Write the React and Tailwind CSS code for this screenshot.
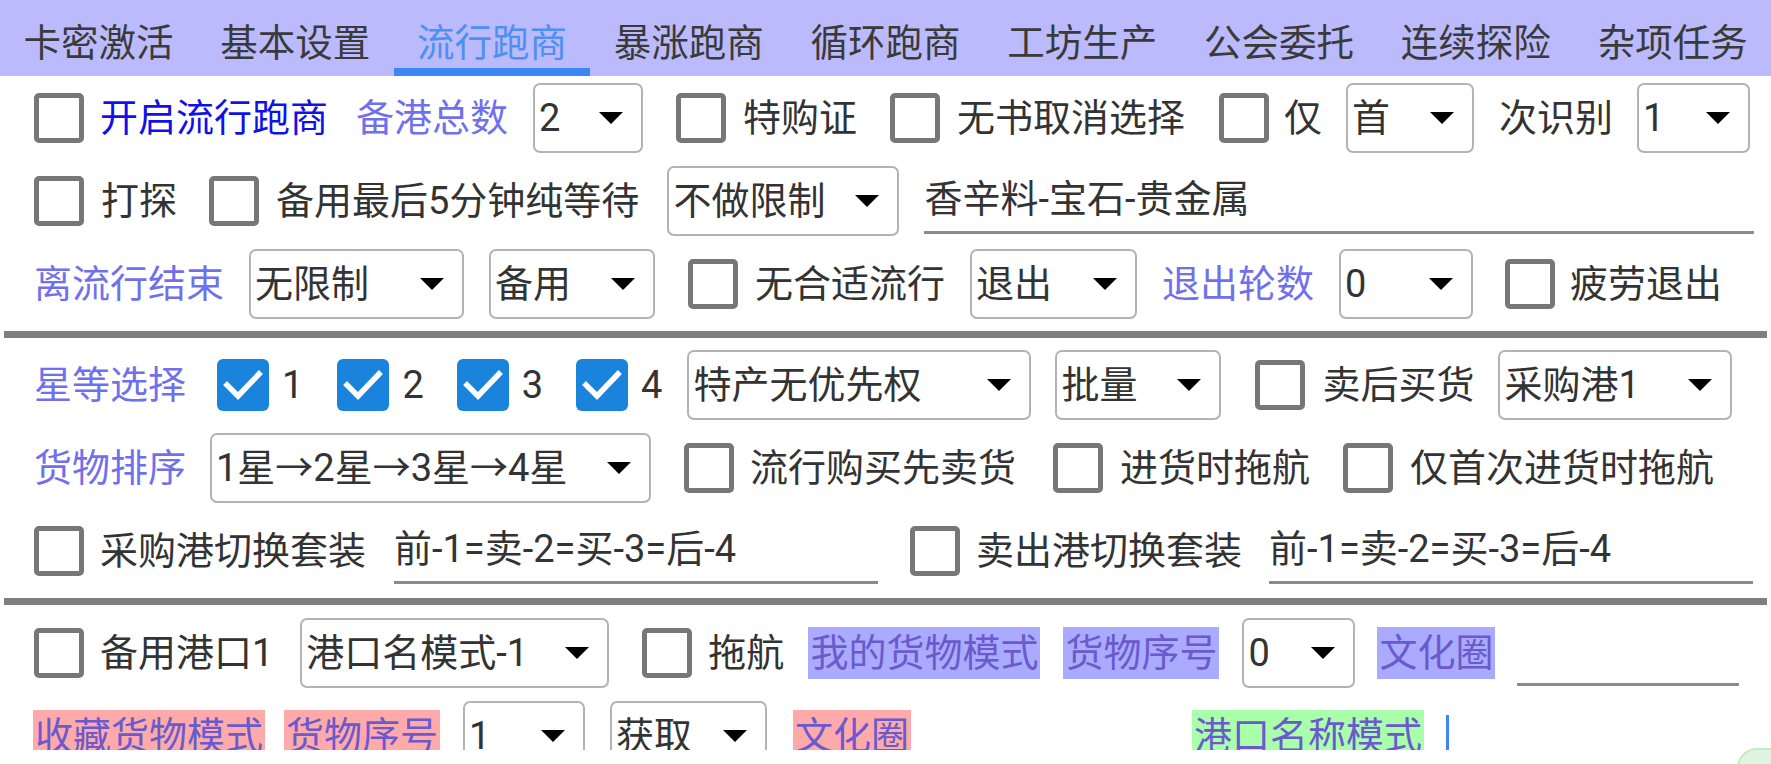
import React from 'react';

const tabs = ['卡密激活', '基本设置', '流行跑商', '暴涨跑商', '循环跑商', '工坊生产', '公会委托', '连续探险', '杂项任务'];

// unchecked android-style checkbox
const Box = ({ className = '' }) => (
    <div className={`w-[50px] h-[50px] shrink-0 rounded-[5px] border-[5px] border-[#777777] ${className}`}></div>
);

const Checked = ({ className = '' }) => (
    <div className={`w-[52px] h-[52px] shrink-0 rounded-[6px] bg-[#1a84dc] flex items-center justify-center ${className}`}>
        <svg width="52" height="52" viewBox="0 0 52 52">
            <polyline points="10,26 21,37 42,15" fill="none" stroke="#ffffff" strokeWidth="5.5" strokeLinecap="square" />
        </svg>
    </div>
);

const T = ({ children, className = '' }) => (
    <span className={`shrink-0 whitespace-nowrap ${className}`}>{children}</span>
);

const Select = ({ value, className = '' }) => (
    <div className={`h-[70px] shrink-0 rounded-[7px] border-2 border-[#b3b3b3] flex items-center justify-between pl-[4px] pr-[18px] ${className}`}>
        <span className="whitespace-nowrap">{value}</span>
        <svg width="24" height="12" viewBox="0 0 24 12" className="shrink-0">
            <polygon points="0,0 24,0 12,12" fill="#000000" />
        </svg>
    </div>
);

const Input = ({ value, className = '' }) => (
    <div className={`h-[66px] shrink-0 border-b-[3px] border-[#8c8c8c] flex items-center whitespace-nowrap ${className}`}>{value}</div>
);

const Mark = ({ children, className = '' }) => (
    <span className={`shrink-0 whitespace-nowrap px-[2px] leading-[52px] text-[#6a5acd] ${className}`}>{children}</span>
);

const Divider = ({ className = '' }) => (
    <div className={`h-[7px] mx-[4px] bg-[#7f7f7f] ${className}`}></div>
);

const App = () => {
    return (
        <div className="w-[1771px] h-[764px] bg-white relative overflow-hidden font-['Roboto','Noto_Sans_CJK_SC',sans-serif] text-[#333333]">
            <div className="h-[750px] overflow-hidden">

                {/* tab bar */}
                <div className="h-[76px] bg-[#babafc] flex">
                    {tabs.map((t, i) => (
                        <div key={t} className="flex-1 relative flex items-center justify-center pt-[9px]">
                            <span className={`text-[37.5px] leading-[48px] whitespace-nowrap ${i === 2 ? 'text-[#4f8ff2]' : 'text-[#3a3a3a]'}`}>{t}</span>
                            {i === 2 && <div className="absolute left-0 right-0 bottom-0 h-[8px] bg-[#3c87f5]"></div>}
                        </div>
                    ))}
                </div>

                <div className="text-[38px] leading-[48px]">
                    {/* row 1 */}
                    <div className="h-[83px] flex items-center">
                        <Box className="ml-[34px]" />
                        <T className="ml-[16px] text-[#1010e8]">开启流行跑商</T>
                        <T className="ml-[28px] text-[#7070ee]">备港总数</T>
                        <Select value="2" className="ml-[25px] w-[110px]" />
                        <Box className="ml-[33px]" />
                        <T className="ml-[17px]">特购证</T>
                        <Box className="ml-[33px]" />
                        <T className="ml-[17px]">无书取消选择</T>
                        <Box className="ml-[34px]" />
                        <T className="ml-[15px]">仅</T>
                        <Select value="首" className="ml-[24px] w-[128px]" />
                        <T className="ml-[25px]">次识别</T>
                        <Select value="1" className="ml-[24px] w-[113px]" />
                    </div>

                    {/* row 2 */}
                    <div className="h-[83px] flex items-center">
                        <Box className="ml-[34px]" />
                        <T className="ml-[17px]">打探</T>
                        <Box className="ml-[32px]" />
                        <T className="ml-[17px]">备用最后5分钟纯等待</T>
                        <Select value="不做限制" className="ml-[28px] w-[232px]" />
                        <Input value="香辛料-宝石-贵金属" className="ml-[25px] w-[830px]" />
                    </div>

                    {/* row 3 */}
                    <div className="h-[83px] flex items-center">
                        <T className="ml-[34px] text-[#7070ee]">离流行结束</T>
                        <Select value="无限制" className="ml-[25px] w-[215px]" />
                        <Select value="备用" className="ml-[25px] w-[166px]" />
                        <Box className="ml-[33px]" />
                        <T className="ml-[17px]">无合适流行</T>
                        <Select value="退出" className="ml-[25px] w-[167px]" />
                        <T className="ml-[25px] text-[#7070ee]">退出轮数</T>
                        <Select value="0" className="ml-[25px] w-[134px]" />
                        <Box className="ml-[32px]" />
                        <T className="ml-[15px]">疲劳退出</T>
                    </div>

                    <Divider className="mt-[6px] mb-[5px]" />

                    {/* row 4 */}
                    <div className="h-[83px] flex items-center">
                        <T className="ml-[34px] text-[#7070ee]">星等选择</T>
                        <Checked className="ml-[31px]" />
                        <T className="ml-[13px]">1</T>
                        <Checked className="ml-[34px]" />
                        <T className="ml-[13px]">2</T>
                        <Checked className="ml-[33px]" />
                        <T className="ml-[13px]">3</T>
                        <Checked className="ml-[33px]" />
                        <T className="ml-[13px]">4</T>
                        <Select value="特产无优先权" className="ml-[25px] w-[344px]" />
                        <Select value="批量" className="ml-[24px] w-[166px]" />
                        <Box className="ml-[34px]" />
                        <T className="ml-[17px]">卖后买货</T>
                        <Select value="采购港1" className="ml-[24px] w-[234px]" />
                    </div>

                    {/* row 5 */}
                    <div className="h-[83px] flex items-center">
                        <T className="ml-[34px] text-[#7070ee]">货物排序</T>
                        <Select value="1星→2星→3星→4星" className="ml-[24px] w-[441px]" />
                        <Box className="ml-[33px]" />
                        <T className="ml-[16px]">流行购买先卖货</T>
                        <Box className="ml-[37px]" />
                        <T className="ml-[17px]">进货时拖航</T>
                        <Box className="ml-[33px]" />
                        <T className="ml-[17px]">仅首次进货时拖航</T>
                    </div>

                    {/* row 6 */}
                    <div className="h-[83px] flex items-center">
                        <Box className="ml-[34px]" />
                        <T className="ml-[16px]">采购港切换套装</T>
                        <Input value="前-1=卖-2=买-3=后-4" className="ml-[28px] w-[484px]" />
                        <Box className="ml-[32px]" />
                        <T className="ml-[16px]">卖出港切换套装</T>
                        <Input value="前-1=卖-2=买-3=后-4" className="ml-[27px] w-[484px]" />
                    </div>

                    <Divider className="mt-[6px] mb-[6px]" />

                    {/* row 7 */}
                    <div className="h-[83px] flex items-center">
                        <Box className="ml-[34px]" />
                        <T className="ml-[16px]">备用港口1</T>
                        <Select value="港口名模式-1" className="ml-[27px] w-[309px]" />
                        <Box className="ml-[33px]" />
                        <T className="ml-[16px]">拖航</T>
                        <Mark className="ml-[24px] bg-[#aaaaff]">我的货物模式</Mark>
                        <Mark className="ml-[23px] bg-[#aaaaff]">货物序号</Mark>
                        <Select value="0" className="ml-[23px] w-[113px]" />
                        <Mark className="ml-[22px] bg-[#aaaaff]">文化圈</Mark>
                        <Input value="" className="ml-[22px] w-[222px]" />
                    </div>

                    {/* row 8 */}
                    <div className="h-[83px] flex items-center">
                        <Mark className="ml-[33px] bg-[#ffaaaa]">收藏货物模式</Mark>
                        <Mark className="ml-[19px] bg-[#ffaaaa]">货物序号</Mark>
                        <Select value="1" className="ml-[23px] w-[122px]" />
                        <Select value="获取" className="ml-[25px] w-[157px]" />
                        <Mark className="ml-[26px] bg-[#ffaaaa]">文化圈</Mark>
                        <Mark className="ml-[281px] bg-[#aaffaa]">港口名称模式</Mark>
                        <div className="ml-[22px] w-[3px] h-[42px] bg-[#3f87f5] shrink-0"></div>
                    </div>
                </div>
            </div>

            {/* floating button peeking in the corner */}
            <div className="absolute left-[1737px] top-[748px] w-[64px] h-[64px] rounded-[20px] bg-[#dff5df] border-2 border-[#c5ebc5]"></div>
        </div>
    );
};

export default App;
